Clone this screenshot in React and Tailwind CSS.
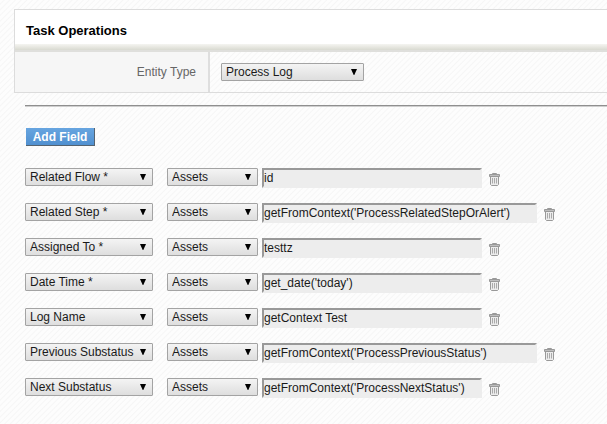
import React from 'react';

const rows = [
  { field: 'Related Flow *', value: 'id' },
  { field: 'Related Step *', value: "getFromContext('ProcessRelatedStepOrAlert')", wide: true },
  { field: 'Assigned To *', value: 'testtz' },
  { field: 'Date Time *', value: "get_date('today')" },
  { field: 'Log Name', value: 'getContext Test' },
  { field: 'Previous Substatus', value: "getFromContext('ProcessPreviousStatus')", wide: true },
  { field: 'Next Substatus', value: "getFromContext('ProcessNextStatus')" },
];

const fieldNames = rows.map((row) => row.field);

function Select({ id, label, value, options, width }) {
  return (
    <div className={`relative h-[18px] shrink-0 ${width}`}>
      <select
        id={id}
        aria-label={label}
        defaultValue={value}
        className="block h-[18px] w-full appearance-none rounded-[1px] border border-[#a3a3a3] bg-linear-to-b from-[#f4f4f4] to-[#dedede] pr-4 pl-1 text-[12px] leading-4 text-[#1a1a1a]"
      >
        {options.map((option) => (
          <option key={option}>{option}</option>
        ))}
      </select>
      <svg className="pointer-events-none absolute top-1.5 right-[7px] h-1.5 w-1.5" viewBox="0 0 6 6" aria-hidden="true">
        <path d="M0 0H6L3.3 6H2.7Z" fill="#000" />
      </svg>
    </div>
  );
}

function TrashIcon() {
  return (
    <svg className="h-[13px] w-[11px]" viewBox="0 0 11 13" fill="none" stroke="#999" aria-hidden="true">
      <path d="M3.5 1.5V0.5H7.5V1.5" />
      <path d="M0.5 1.5H10.5V3.5H0.5Z" fill="#bdbdbd" />
      <path d="M1.5 4V11.5L2.5 12.5H8.5L9.5 11.5V4" fill="#ececec" />
      <path d="M3.5 5V10.5M5.5 5V10.5M7.5 5V10.5" strokeWidth="0.8" />
    </svg>
  );
}

export default function App() {
  return (
    <main className="min-h-screen overflow-hidden bg-[repeating-linear-gradient(135deg,#fdfdfd_0px,#fdfdfd_2px,#f6f6f6_3px,#fdfdfd_4px)] pt-[9px] pl-3.5 font-['Liberation_Sans',Arial,sans-serif] text-[12px] text-[#1a1a1a]">
      <section className="border-y border-l border-[#dcdcdc]">
        <h1 className="h-[34px] bg-white pt-3 pl-[11px] text-[13px] leading-[18px] font-bold text-black">Task Operations</h1>
        <div className="h-2 border-b-2 border-[#dfdfdc] bg-linear-to-b from-[#f5f5f1] to-[#d9dad1]" />
        <div className="flex h-10">
          <label htmlFor="entity" className="flex w-[195px] shrink-0 items-center justify-end border-r-2 border-[#dedede] bg-[#f6f6f6] pr-3 text-[#666]">
            Entity Type
          </label>
          <div className="flex items-center pl-[11px]">
            <Select id="entity" value="Process Log" options={['Process Log']} width="w-[143px]" />
          </div>
        </div>
      </section>

      <div className="pl-[11px]">
        <hr className="mt-3 border-t border-b border-t-[#8f8f8f] border-b-[#cfcfcf]" />
        <button
          type="button"
          className="mt-[21px] ml-px block h-[18px] w-[69px] border-r border-b border-[#55636f] bg-linear-to-b from-[#67a5e0] to-[#5090d0] text-[12px] leading-4 font-bold text-white"
        >
          Add Field
        </button>
        <div className="mt-[22px] flex flex-col gap-[15px]">
          {rows.map((row) => (
            <div key={row.field} className="flex items-start">
              <Select label="Field" value={row.field} options={fieldNames} width="w-32" />
              <div className="w-3.5 shrink-0" />
              <Select label="Source" value="Assets" options={['Assets']} width="w-[91px]" />
              <input
                aria-label={`${row.field} value`}
                defaultValue={row.value}
                className={`ml-1 block h-5 shrink-0 border-2 border-t-[#999] border-r-[#ededed] border-b-[#ededed] border-l-[#999] bg-[#ededed] text-[12px] leading-4 ${row.wide ? 'w-[275px]' : 'w-[220px]'}`}
              />
              <button type="button" aria-label={`Delete ${row.field}`} className="mt-[5px] ml-[7px] block shrink-0">
                <TrashIcon />
              </button>
            </div>
          ))}
        </div>
      </div>
    </main>
  );
}
